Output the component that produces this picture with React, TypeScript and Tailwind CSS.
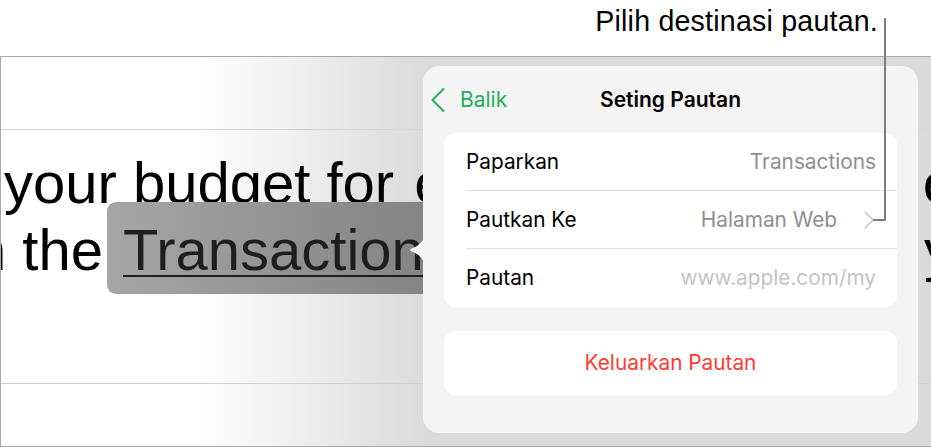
import { ChevronLeft, ChevronRight } from 'lucide-react'

const ROWS = [
  { label: 'Paparkan', value: 'Transactions', tone: 'text-[#8e8e93]', chevron: false },
  { label: 'Pautkan Ke', value: 'Halaman Web', tone: 'text-[#8e8e93]', chevron: true },
  { label: 'Pautan', value: 'www.apple.com/my', tone: 'text-[#c4c4c7]', chevron: false },
]

function LinkPanel() {
  return (
    <div className="absolute left-[423px] top-[66px] w-[495px] h-[367px] rounded-[16px] bg-[#f4f4f4] px-[21px] font-['Inter',sans-serif]">
      {/* popover arrow pointing at the selection */}
      <svg className="absolute left-[-14px] top-[168px]" width="15" height="32" viewBox="0 0 15 32">
        <path d="M15 0 C15 6 12 9 8 12 L2 15 Q0 16 2 17 L8 20 C12 23 15 26 15 32 Z" fill="#f4f4f4" />
      </svg>

      <div className="relative h-[67px] flex items-center justify-center">
        <div className="absolute left-[-28px] flex items-center text-[#22b05a] text-[21px]">
          <ChevronLeft size={44} strokeWidth={1.1} />
          <span>Balik</span>
        </div>
        <h2 className="text-[21px] font-semibold text-black">Seting Pautan</h2>
      </div>

      <div className="bg-white rounded-[12px] pl-[22px] text-[20.8px]">
        {ROWS.map((r, i) => (
          <div
            key={r.label}
            className={`flex items-center justify-between pr-[21px] h-[58px] ${i < ROWS.length - 1 ? 'border-b border-[#e2e2e4]' : ''}`}
          >
            <span className="text-black">{r.label}</span>
            <span className={`flex items-center ${r.tone}`}>
              {r.value}
              {r.chevron && (
                <ChevronRight size={32} strokeWidth={1.2} className="ml-[16px] mr-[-9px] text-[#c7c7cc]" />
              )}
            </span>
          </div>
        ))}
      </div>

      <div className="mt-[24px] h-[64px] bg-white rounded-[12px] flex items-center justify-center text-[20.8px] text-[#ff3b30]">
        Keluarkan Pautan
      </div>
    </div>
  )
}

export default function App() {
  return (
    <div className="relative w-[931px] h-[447px] overflow-hidden bg-white font-['Liberation_Sans',Arial,sans-serif]">
      <div className="h-[56px] flex items-center justify-end pr-[53px] pb-[14px]">
        <p className="text-[28.6px] text-black tracking-[0.2px]">Pilih destinasi pautan.</p>
      </div>

      <div className="h-[391px] border-t border-l border-b border-[#a8a8a8] bg-[linear-gradient(to_right,#ffffff_21%,#dadada_46%,#dadada)] flex flex-col">
        <div className="h-[73px] border-b border-[#d6d6d6]" />
        <div className="h-[254px] border-b border-[#d0d0d0] pt-[19px] text-[58px] leading-[67px] text-black whitespace-nowrap overflow-hidden">
          <div className="flex justify-between">
            <span className="ml-[3px]">
              your budget for <span className="ml-[4px]">each</span>
            </span>
            <span className="mr-[-24px]">e</span>
          </div>
          <div className="flex justify-between">
            <span className="ml-[-27px]">
              n the
              <span className="inline-block ml-[4px] pt-[14px] pb-[11px] -mt-[14px] -mb-[11px] pl-[16px] pr-[40px] rounded-[9px] bg-[linear-gradient(to_right,#a6a6a6,#7c7c7c)] text-[#1e1e1e] underline decoration-[2px] underline-offset-[5px]">
                Transactions
              </span>
            </span>
            <span className="mr-[-22px]">y</span>
          </div>
        </div>
        <div className="flex-1" />
      </div>

      <LinkPanel />

      {/* callout leader line */}
      <div className="absolute left-[884px] top-[18px] w-[2px] h-[203px] bg-[#7d7d7d]" />
      <div className="absolute left-[873px] top-[219px] w-[13px] h-[2px] bg-[#7d7d7d]" />
    </div>
  )
}
